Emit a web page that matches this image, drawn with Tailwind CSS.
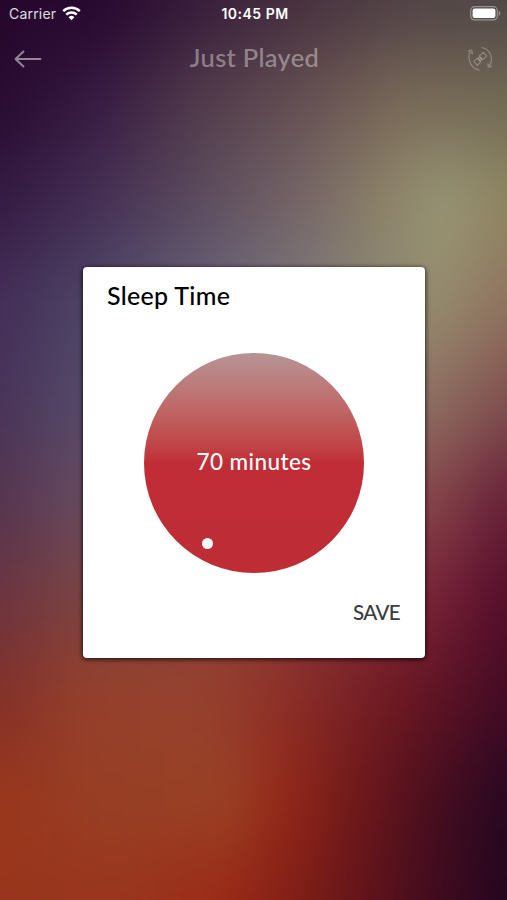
<!DOCTYPE html>
<html lang="en">
<head>
    <meta charset="UTF-8">
    <meta name="viewport" content="width=device-width, initial-scale=1.0">
    <title>Just Played</title>
    <script src="https://cdn.jsdelivr.net/npm/@tailwindcss/browser@4"></script>
</head>
<body class="relative h-screen overflow-hidden bg-[#28072d] font-['Lato',sans-serif]">

    <!-- blurred artwork -->
    <svg class="absolute inset-0 w-[507px] h-[900px]" viewBox="0 0 507 900">
        <defs>
            <filter id="soft" filterUnits="userSpaceOnUse" x="-100" y="-150" width="707" height="1200" color-interpolation-filters="sRGB"><feGaussianBlur stdDeviation="18 40"/></filter>
            <linearGradient id="row" gradientUnits="userSpaceOnUse" x1="0" y1="0" x2="507" y2="0"/>
            <linearGradient id="r0" href="#row"><stop offset="0" stop-color="#26062b"/><stop offset=".2" stop-color="#26062e"/><stop offset=".4" stop-color="#371c3a"/><stop offset=".6" stop-color="#46303e"/><stop offset=".8" stop-color="#4f4145"/><stop offset="1" stop-color="#504646"/></linearGradient>
            <linearGradient id="r1" href="#row"><stop offset="0" stop-color="#280a30"/><stop offset=".2" stop-color="#381c42"/><stop offset=".4" stop-color="#523c4b"/><stop offset=".6" stop-color="#665053"/><stop offset=".8" stop-color="#7a6a58"/><stop offset="1" stop-color="#726a54"/></linearGradient>
            <linearGradient id="r2" href="#row"><stop offset="0" stop-color="#341a42"/><stop offset=".2" stop-color="#463055"/><stop offset=".4" stop-color="#5c4c5e"/><stop offset=".6" stop-color="#766667"/><stop offset=".75" stop-color="#8c8268"/><stop offset=".88" stop-color="#999776"/><stop offset="1" stop-color="#8f8662"/></linearGradient>
            <linearGradient id="r3" href="#row"><stop offset="0" stop-color="#442e58"/><stop offset=".18" stop-color="#4d4566"/><stop offset=".4" stop-color="#666078"/><stop offset=".6" stop-color="#7e787a"/><stop offset=".85" stop-color="#968e6e"/><stop offset="1" stop-color="#907460"/></linearGradient>
            <linearGradient id="r4" href="#row"><stop offset="0" stop-color="#483358"/><stop offset=".16" stop-color="#54496a"/><stop offset=".84" stop-color="#907264"/><stop offset="1" stop-color="#80504e"/></linearGradient>
            <linearGradient id="r5" href="#row"><stop offset="0" stop-color="#54354f"/><stop offset=".16" stop-color="#664a60"/><stop offset=".84" stop-color="#88484a"/><stop offset="1" stop-color="#661f38"/></linearGradient>
            <linearGradient id="r6" href="#row"><stop offset="0" stop-color="#6c343f"/><stop offset=".17" stop-color="#7c4442"/><stop offset=".5" stop-color="#8e4038"/><stop offset=".84" stop-color="#7a2338"/><stop offset="1" stop-color="#550c29"/></linearGradient>
            <linearGradient id="r7" href="#row"><stop offset="0" stop-color="#843028"/><stop offset=".17" stop-color="#963f2a"/><stop offset=".38" stop-color="#97422e"/><stop offset=".55" stop-color="#8e3028"/><stop offset=".8" stop-color="#6a1621"/><stop offset="1" stop-color="#420b24"/></linearGradient>
            <linearGradient id="r8" href="#row"><stop offset="0" stop-color="#9a371c"/><stop offset=".2" stop-color="#973f25"/><stop offset=".45" stop-color="#984225"/><stop offset=".55" stop-color="#962a17"/><stop offset=".68" stop-color="#761a1a"/><stop offset=".82" stop-color="#50101d"/><stop offset="1" stop-color="#260722"/></linearGradient>
            <linearGradient id="r9" href="#row"><stop offset="0" stop-color="#98351c"/><stop offset=".25" stop-color="#99351c"/><stop offset=".43" stop-color="#9c2a16"/><stop offset=".56" stop-color="#861f17"/><stop offset=".72" stop-color="#60141a"/><stop offset=".86" stop-color="#400b1e"/><stop offset="1" stop-color="#24051f"/></linearGradient>
        </defs>
        <g filter="url(#soft)">
            <rect x="-100" y="-150" width="707" height="200" fill="url(#r0)"/>
            <rect x="-100" y="50" width="707" height="100" fill="url(#r1)"/>
            <rect x="-100" y="150" width="707" height="100" fill="url(#r2)"/>
            <rect x="-100" y="250" width="707" height="100" fill="url(#r3)"/>
            <rect x="-100" y="350" width="707" height="100" fill="url(#r4)"/>
            <rect x="-100" y="450" width="707" height="100" fill="url(#r5)"/>
            <rect x="-100" y="550" width="707" height="100" fill="url(#r6)"/>
            <rect x="-100" y="650" width="707" height="100" fill="url(#r7)"/>
            <rect x="-100" y="750" width="707" height="100" fill="url(#r8)"/>
            <rect x="-100" y="850" width="707" height="200" fill="url(#r9)"/>
        </g>
    </svg>

    <div class="relative flex flex-col h-full">
        <!-- status bar -->
        <div class="grid grid-cols-3 items-center h-7 pb-0.5 pl-[9px] pr-[6px] text-white font-['Inter',sans-serif]">
            <div class="flex items-center gap-[6px]">
                <span class="text-[14px] tracking-[0.2px] text-white/85">Carrier</span>
                <svg class="w-[19px] h-[15px]" viewBox="0 0 19 15" fill="none" stroke="#fff" stroke-width="2.5">
                    <path d="M1.200 5.200a12 12 0 0 1 16.600 0"/>
                    <path d="M4.300 8.600a7.400 7.400 0 0 1 10.400 0"/>
                    <path d="M9.500 14.200l-2.900-3a4.100 4.100 0 0 1 5.800 0z" fill="#fff" stroke="none"/>
                </svg>
            </div>
            <span class="text-center text-[14px] font-semibold tracking-[0.5px] whitespace-nowrap">10:45 PM</span>
            <svg class="justify-self-end w-[31px] h-[15px]" viewBox="0 0 31 15">
                <rect x=".7" y=".7" width="26.600" height="13.200" rx="3.800" fill="none" stroke="#fff" stroke-opacity=".4" stroke-width="1.200"/>
                <rect x="2.600" y="2.600" width="22.800" height="9.400" rx="2" fill="#fff"/>
                <path d="M28.800 5v4.800c1-.4 1.600-1.300 1.600-2.400S29.800 5.400 28.800 5z" fill="#fff" fill-opacity=".4"/>
            </svg>
        </div>

        <header class="flex items-center justify-between h-[61px] px-[14px]">
            <svg class="w-7 h-[18px]" viewBox="0 0 28 18" fill="none" stroke="#fff" stroke-opacity=".5" stroke-width="1.900" stroke-linecap="round" stroke-linejoin="round">
                <path d="M9.500 1.500L1.500 9l8 7.500M1.500 9h25"/>
            </svg>
            <h1 class="-mt-0.5 text-[25.500px] font-medium text-white/40 tracking-[0.300px]">Just Played</h1>
            <svg class="w-[26px] h-[26px]" viewBox="0 0 26 26" fill="none" stroke="#fff" stroke-opacity=".25" stroke-width="1.300" stroke-linejoin="round">
                <path d="M3.200 5.500C.4 11 2 21.500 12.500 24.200M1.500 5l3.300-.8.700 3.500z"/>
                <path d="M14.500 1.700c9 1.300 12.500 11.300 7.800 18M20.800 18l.5 3.200 3.200-.7z"/>
                <path d="M12.200 10.200l4-4 3.500 3.600-4 4zM6.800 15.600l3.500-3.500 3.600 3.600-3.500 3.500z"/>
                <circle cx="13" cy="13" r="1.500"/>
            </svg>
        </header>

        <!-- sleep timer dialog -->
        <main class="w-[342px] h-[391px] mt-[178px] ml-[83px] flex flex-col items-center rounded bg-white shadow-[0_1px_4px_1px_rgba(0,0,0,0.65)]">
            <h2 class="self-start mt-3 ml-6 h-8 leading-8 text-[25px] font-medium text-black tracking-[0.300px]">Sleep Time</h2>
            <div class="relative mt-[42px] size-[220px] shrink-0 flex items-center justify-center rounded-full bg-linear-to-b from-[#b69496] via-[#c02d37] via-50% to-[#be2c36]">
                <span class="-mt-0.5 text-[22.500px] font-medium text-white tracking-[0.400px]">70 minutes</span>
                <span class="absolute left-[58px] top-[185px] size-[11px] rounded-full bg-white"></span>
            </div>
            <button class="self-end mt-[25px] mr-[25px] h-7 text-[20.500px] leading-7 font-medium text-[#3c3c40] tracking-[-0.600px]">SAVE</button>
        </main>
    </div>

</body>
</html>
